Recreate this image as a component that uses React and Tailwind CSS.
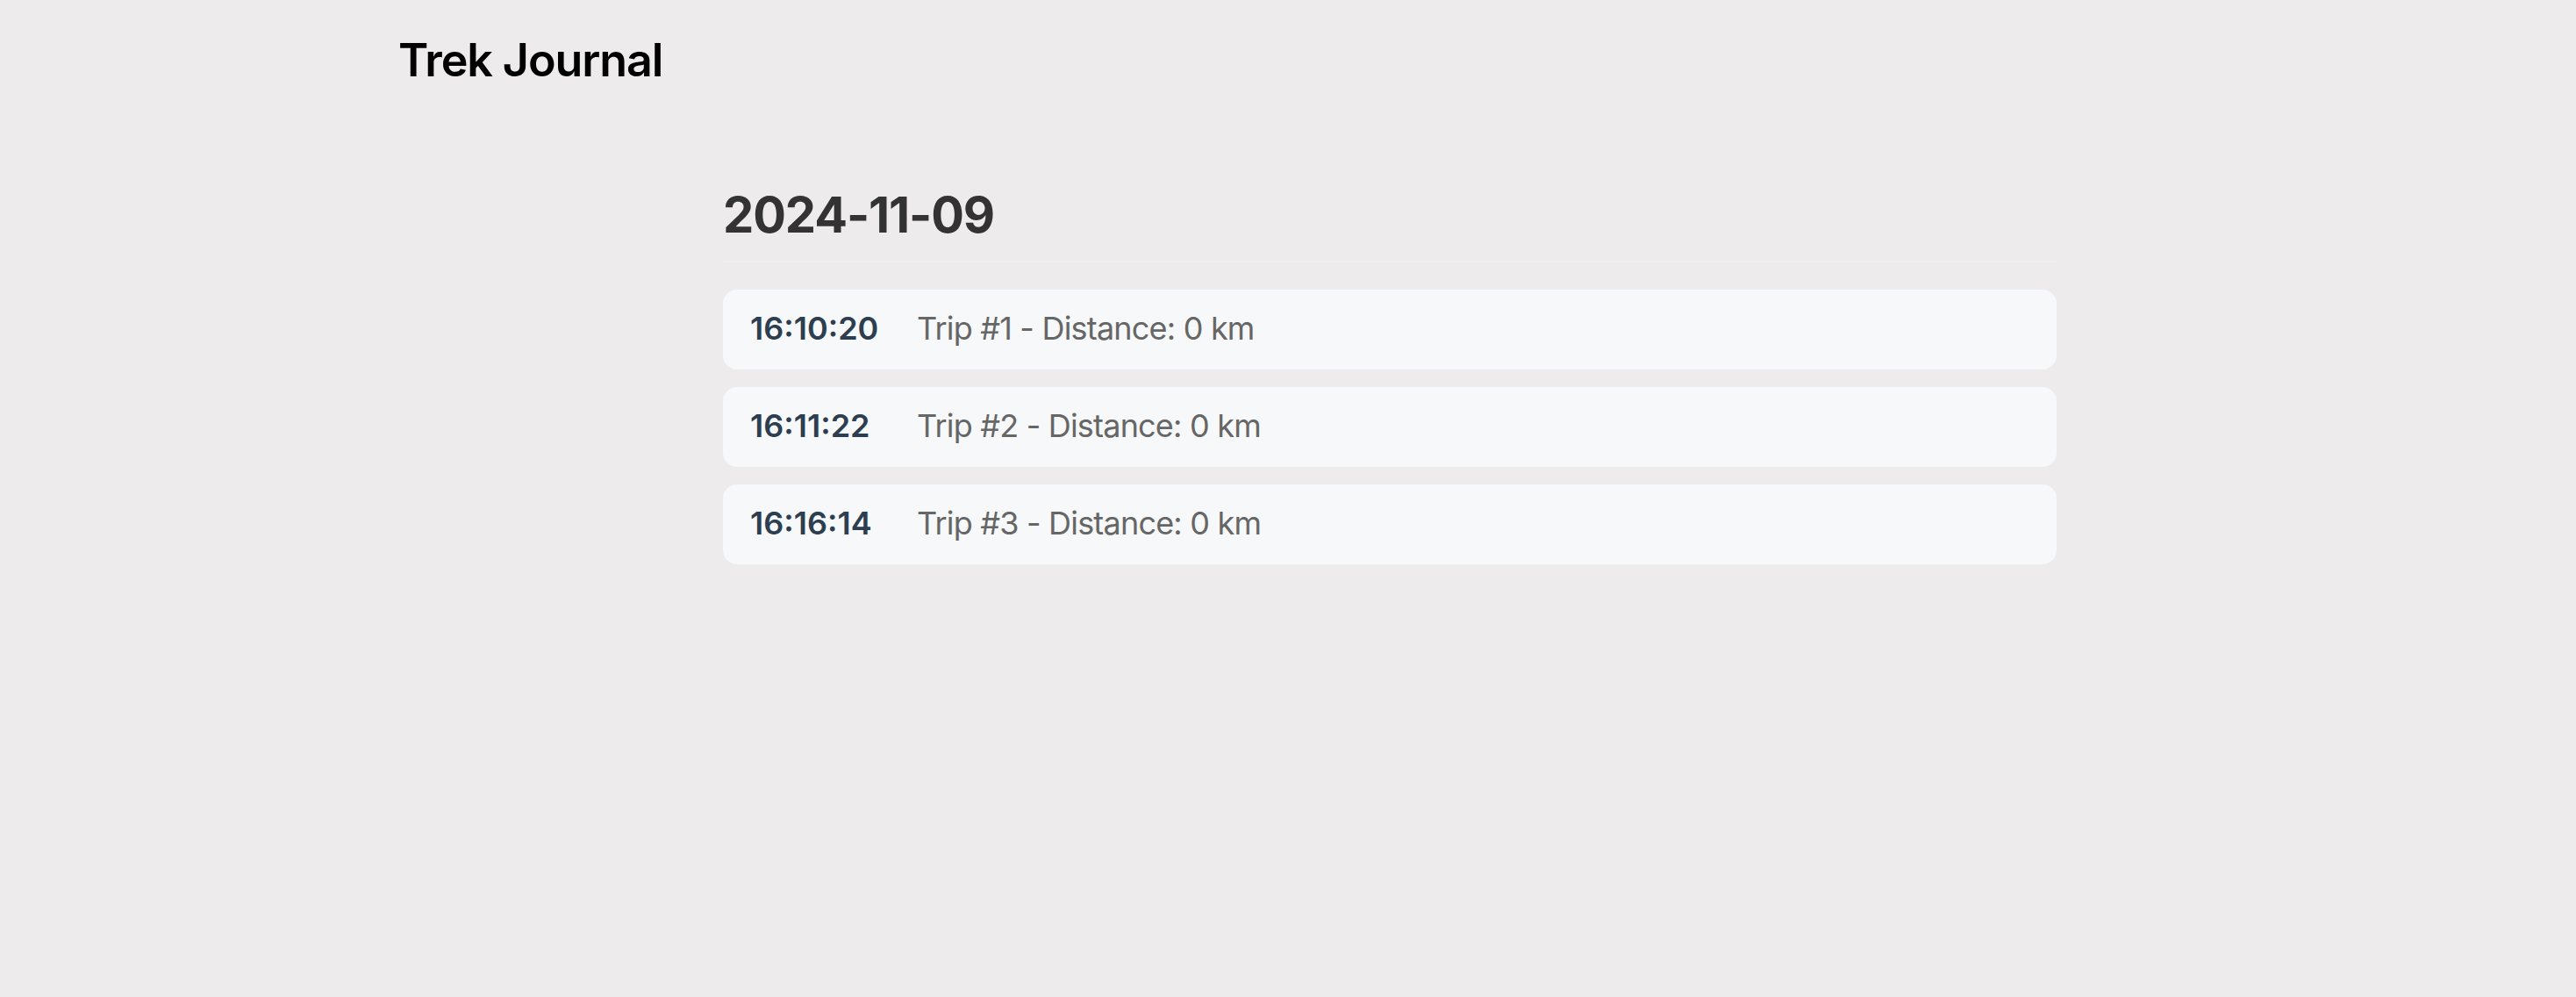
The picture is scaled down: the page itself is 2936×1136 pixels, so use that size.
import React from 'react';

const trips = [
  { id: 1, time: '16:10:20', distance: 0 },
  { id: 2, time: '16:11:22', distance: 0 },
  { id: 3, time: '16:16:14', distance: 0 },
];

const App = () => {
  return (
    <div className="min-h-screen bg-[#edebeb] font-['Inter','Noto_Sans',sans-serif]">
      {/* Header */}
      <header className="pl-[454px] pt-[38px]">
        <h1 className="text-[52px] font-semibold leading-[1.21] tracking-[-1.1px] text-black">Trek Journal</h1>
      </header>

      {/* Day list */}
      <main className="pl-[824px] pt-[111px]">
        <section className="w-[1520px]">
          <h2 className="text-[56px] font-bold leading-[1.21] tracking-[-1.1px] text-[#333333]">2024-11-09</h2>
          <div className="mt-[17px] h-[2px] bg-[#f0efef]"></div>

          <ul className="mt-[31px] flex flex-col gap-[20px]">
            {trips.map((trip) => (
              <li
                key={trip.id}
                className="flex h-[91px] items-center rounded-[16px] bg-[#f7f8f9] px-[31px]"
              >
                <span className="w-[190px] shrink-0 text-[36px] font-semibold leading-[1.21] text-[#2c3e50]">
                  {trip.time}
                </span>
                <span className="text-[36px] leading-[1.21] tracking-[-0.8px] text-[#666666]">
                  Trip #{trip.id} - Distance: {trip.distance} km
                </span>
              </li>
            ))}
          </ul>
        </section>
      </main>
    </div>
  );
};

export default App;
